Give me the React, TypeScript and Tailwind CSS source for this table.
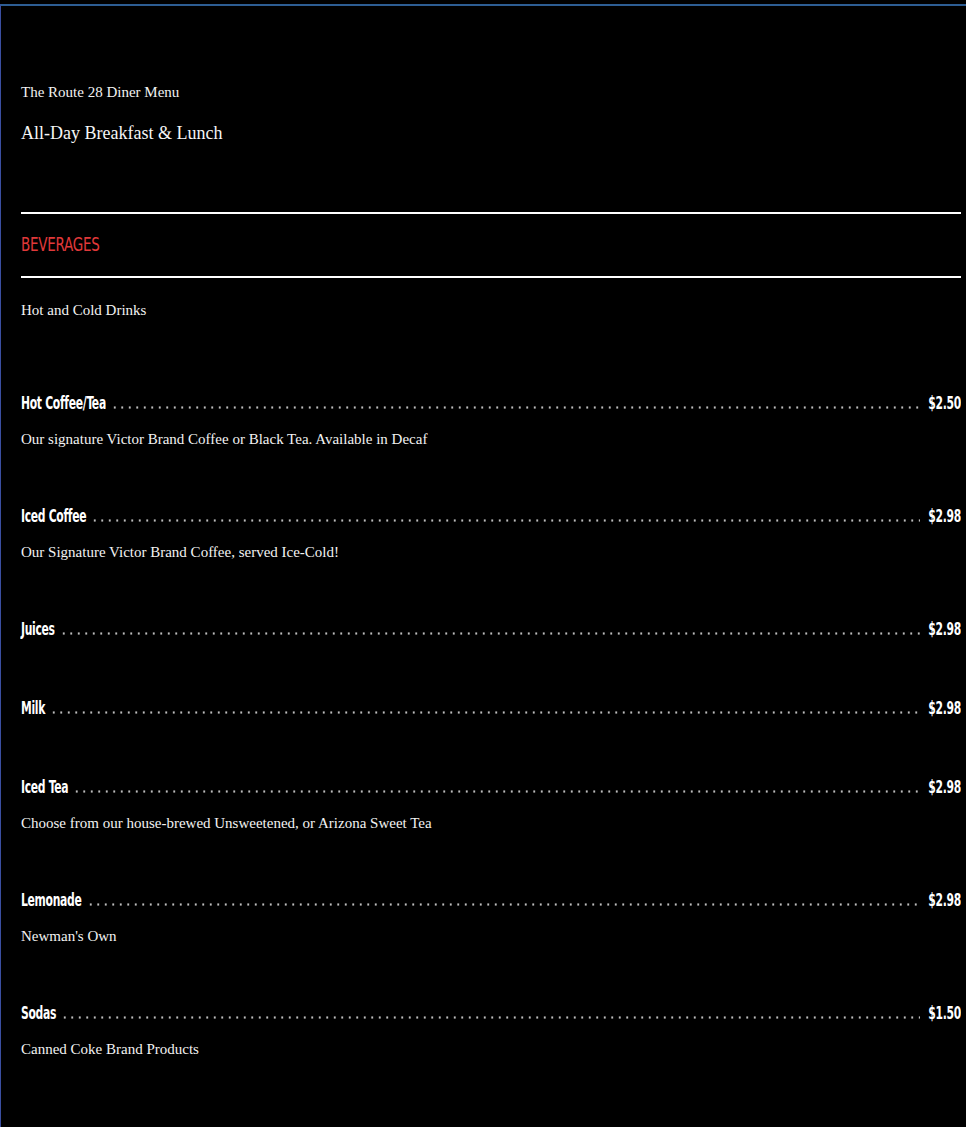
import React from "react";

const items = [
  { name: "Hot Coffee/Tea", price: "$2.50", desc: "Our signature Victor Brand Coffee or Black Tea. Available in Decaf" },
  { name: "Iced Coffee", price: "$2.98", desc: "Our Signature Victor Brand Coffee, served Ice-Cold!" },
  { name: "Juices", price: "$2.98", desc: "" },
  { name: "Milk", price: "$2.98", desc: "" },
  { name: "Iced Tea", price: "$2.98", desc: "Choose from our house-brewed Unsweetened, or Arizona Sweet Tea" },
  { name: "Lemonade", price: "$2.98", desc: "Newman's Own" },
  { name: "Sodas", price: "$1.50", desc: "Canned Coke Brand Products" },
];

// narrow display face: DejaVu condensed, stretched vertically a bit
const condensed = "font-['DejaVu_Sans_Condensed','DejaVu_Sans',sans-serif] [font-stretch:condensed]";

const MenuItem = ({ name, price, desc }: { name: string; price: string; desc: string }) => (
  <div className={desc ? "pb-[53px]" : "pb-[55px]"}>
    <div className="flex items-end h-6 leading-6">
      <span className={`${condensed} block scale-y-[1.5] font-bold text-[12px] tracking-[-0.3px] text-white`}>{name}</span>
      <div className="flex-1 ml-[5px] mr-[8px] mb-[6px] h-[3px] bg-[radial-gradient(circle,#bdbdbd_0.9px,transparent_1.4px)] bg-[length:7.5px_3px] bg-repeat-x" />
      <span className={`${condensed} block scale-y-[1.5] font-bold text-[12px] tracking-[-0.3px] text-white`}>{price}</span>
    </div>
    {desc && (
      <p className="mt-3 leading-6 text-[15px] text-[#f2f2f2]">{desc}</p>
    )}
  </div>
);

export default function App() {
  return (
    <div className="min-h-screen bg-black pt-1 font-['Liberation_Serif',serif]">
      <div className="min-h-[1123px] border-t-2 border-t-[#2d5d93] border-l border-l-[#3a4ea0] pl-5 pr-[5px]">
        <header className="pt-[74px]">
          <p className="leading-6 text-[15px] text-[#f2f2f2]">The Route 28 Diner Menu</p>
          <h1 className="mt-[17px] leading-6 text-[18px] text-[#f5f5f5]">All-Day Breakfast &amp; Lunch</h1>
        </header>

        <section className="mt-[67px]">
          <div className="border-t-2 border-b-2 border-white pt-[18px] pb-5">
            <h2 className={`${condensed} block scale-y-[1.35] origin-left leading-6 text-[15px] text-[#e0393a] tracking-[-0.25px]`}>BEVERAGES</h2>
          </div>
          <p className="mt-5 leading-6 text-[15px] text-[#f2f2f2]">Hot and Cold Drinks</p>

          <div className="mt-[69px] flex flex-col">
            {items.map((item) => (
              <MenuItem key={item.name} {...item} />
            ))}
          </div>
        </section>
      </div>
    </div>
  );
}
